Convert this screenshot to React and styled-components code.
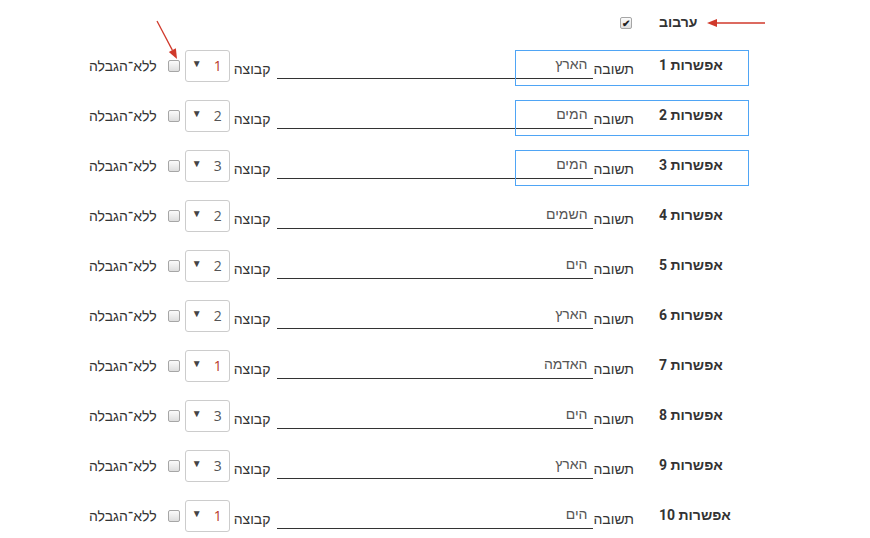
import React from 'react'
import styled, { createGlobalStyle } from 'styled-components'

const GlobalStyle = createGlobalStyle`
  body {
    margin: 0;
    background: #fff;
    font-family: "Open Sans", "Liberation Sans", sans-serif;
    color: #333;
  }
`

// digits from Roboto, Hebrew letters fall through to Liberation Sans
const textFont = `"Roboto", "Liberation Sans", "DejaVu Sans", sans-serif`

const options = [
  { id: 1, answer: 'הארץ', group: 1, marked: true },
  { id: 2, answer: 'המים', group: 2, marked: true },
  { id: 3, answer: 'המים', group: 3, marked: true },
  { id: 4, answer: 'השמים', group: 2 },
  { id: 5, answer: 'הים', group: 2 },
  { id: 6, answer: 'הארץ', group: 2 },
  { id: 7, answer: 'האדמה', group: 1 },
  { id: 8, answer: 'הים', group: 3 },
  { id: 9, answer: 'הארץ', group: 3 },
  { id: 10, answer: 'הים', group: 1 },
]

function Arrow({ x1, y1, x2, y2 }) {
  // line with a filled head at (x2, y2)
  const a = Math.atan2(y2 - y1, x2 - x1)
  const len = 10
  const w = 4
  const bx = x2 - Math.cos(a) * len
  const by = y2 - Math.sin(a) * len
  const px = -Math.sin(a) * w
  const py = Math.cos(a) * w
  return (
    <>
      <line x1={x1} y1={y1} x2={bx} y2={by} stroke="#d0392b" strokeWidth="1.3" />
      <polygon
        points={`${x2},${y2} ${bx + px},${by + py} ${bx - px},${by - py}`}
        fill="#d0392b"
      />
    </>
  )
}

function CheckBox({ checked }) {
  return <Box>{checked ? '✔' : ''}</Box>
}

function GroupPicker({ value }) {
  return (
    <Picker>
      <Value $first={value === 1}>{value}</Value>
      <Caret>▼</Caret>
    </Picker>
  )
}

function App() {
  return (
    <Page>
      <GlobalStyle />
      <List>
        <Header>
          <Title>ערבוב</Title>
          <CheckBox checked />
        </Header>

        {options.map((o) => (
          <Row key={o.id}>
            {o.marked && <Highlight />}
            <Title>אפשרות {o.id}</Title>
            <Caption $gap={25}>תשובה</Caption>
            <AnswerField>{o.answer}</AnswerField>
            <Caption $gap={6}>קבוצה</Caption>
            <GroupPicker value={o.group} />
            <CheckBox />
            <NoLimit>ללא־הגבלה</NoLimit>
          </Row>
        ))}
      </List>

      <Pointer width="870" height="70">
        <Arrow x1={765} y1={23} x2={707} y2={23} />
        <Arrow x1={157} y1={21} x2={177} y2={59} />
      </Pointer>
    </Page>
  )
}

export default App

const Page = styled.div`
  position: relative;
  width: 870px;
  height: 538px;
  overflow: hidden;
`

const List = styled.div`
  direction: rtl;
  display: flex;
  flex-direction: column;
  padding-right: 121px;
`

const Header = styled.div`
  box-sizing: border-box;
  display: flex;
  align-items: center;
  height: 40px;
  padding-top: 3px;
  gap: 22px;
`

const Row = styled.div`
  position: relative;
  display: flex;
  align-items: center;
  height: 50px;
`

const Highlight = styled.div`
  position: absolute;
  right: 0;
  top: 10px;
  width: 232px;
  height: 34px;
  border: 1.5px solid #4fa5f5;
  pointer-events: none;
`

const Title = styled.div`
  width: 90px;
  flex: none;
  text-align: left;
  font-family: ${textFont};
  font-size: 14px;
  font-weight: 700;
  color: #333;
`

const Caption = styled.div`
  flex: none;
  white-space: nowrap;
  font-family: ${textFont};
  font-size: 14px;
  color: #333;
  padding-top: 8px;
  margin-right: ${(p) => p.$gap}px;
`

const AnswerField = styled.div`
  flex: none;
  box-sizing: border-box;
  width: 316px;
  height: 23px;
  margin: 4px 1px 0 0;
  padding: 0 5px 0 3px;
  border-bottom: 1px solid #333;
  font-family: ${textFont};
  font-size: 14px;
  line-height: 16px;
  color: #555;
`

const Picker = styled.div`
  flex: none;
  box-sizing: border-box;
  width: 45px;
  height: 32px;
  margin: 1px 4px 0 0;
  padding: 0 7px 0 6px;
  display: flex;
  align-items: center;
  justify-content: space-between;
  border: 1px solid #ccc;
  border-radius: 3px;
  background: #fff;
`

const Value = styled.span`
  font-size: 14px;
  color: ${(p) => (p.$first ? '#b8372c' : '#555')};
`

const Caret = styled.span`
  font-size: 10px;
  color: #444;
  margin-bottom: 5px;
`

const Box = styled.span`
  flex: none;
  box-sizing: border-box;
  width: 12px;
  height: 12px;
  margin: 2px 5px 0 0;
  border: 1px solid #a6a6a6;
  border-radius: 2px;
  background: linear-gradient(#fbfbfb, #dedede);
  display: flex;
  align-items: center;
  justify-content: center;
  font-size: 10px;
  font-weight: 700;
  line-height: 1;
  color: #222;
`

const NoLimit = styled.div`
  flex: none;
  margin-right: 11px;
  font-family: ${textFont};
  font-size: 14px;
  color: #333;
  padding-top: 2px;
`

const Pointer = styled.svg`
  position: absolute;
  left: 0;
  top: 0;
  pointer-events: none;
`
